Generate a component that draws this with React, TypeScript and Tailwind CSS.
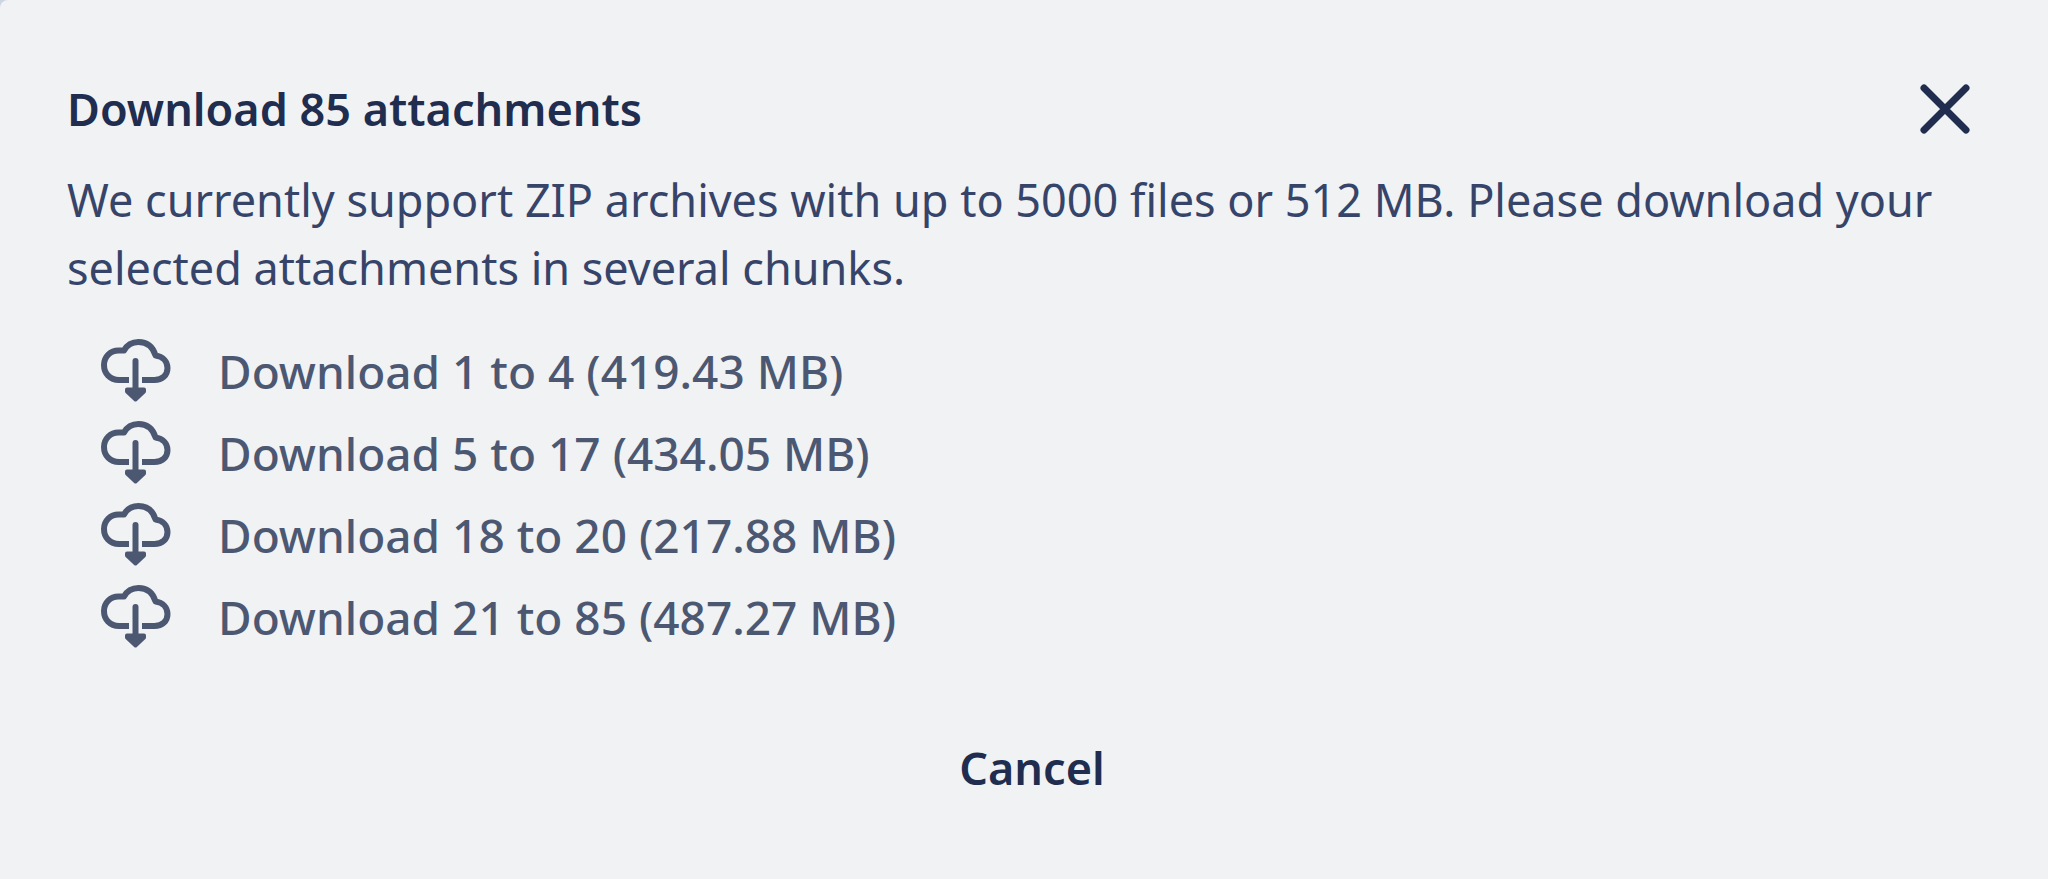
import React from 'react';

const CHUNKS = [
  { from: 1, to: 4, size: '419.43' },
  { from: 5, to: 17, size: '434.05' },
  { from: 18, to: 20, size: '217.88' },
  { from: 21, to: 85, size: '487.27' },
];

function CloudDownloadIcon() {
  return (
    <svg viewBox="0 0 72 66" className="w-[72px] h-[66px] shrink-0" fill="none" aria-hidden="true">
      <path
        d="M29 42H19C10 42 4 35.500 4 27C4 18.500 10.500 12.500 18.500 12.500H24C27 7 32 4 38.500 4C47 4 53 9 55.500 17.500C63 18.500 67.500 23.500 67.500 30C67.500 37.500 62 42 54.500 42H42"
        stroke="currentColor"
        strokeWidth="6"
        strokeLinejoin="round"
      />
      <path d="M35.500 23V54" stroke="currentColor" strokeWidth="6" strokeLinecap="round" />
      <path d="M27 51.500H44V53.500L35.500 61.500L27 53.500Z" fill="currentColor" stroke="currentColor" strokeWidth="4" strokeLinejoin="round" />
    </svg>
  );
}

export default function App() {
  return (
    <div className="min-h-screen bg-[#ccd3e2] flex flex-col font-['Noto_Sans',sans-serif]">
      <div role="dialog" aria-labelledby="dialog-title" className="flex-1 rounded-tl-lg bg-[#f0f2f4] text-[#202d4f] pl-[67px] pr-[51px] pt-[72px] pb-[64px]">
        {/* Header */}
        <div className="flex items-center justify-between h-[74px] mb-[20px]">
          <h1 id="dialog-title" className="text-[45px] leading-[68px] font-semibold">Download 85 attachments</h1>
          <button type="button" aria-label="Close" className="w-[104px] h-[72px] flex items-center justify-center">
            <svg viewBox="0 0 52 52" className="w-[52px] h-[52px]" fill="none" aria-hidden="true">
              <path d="M5 5L47 47M47 5L5 47" stroke="currentColor" strokeWidth="7" strokeLinecap="round" />
            </svg>
          </button>
        </div>

        <p className="text-[45px] leading-[68px] text-[#37446a]">
          We currently support ZIP archives with up to 5000 files or 512 MB. Please download your selected attachments in several chunks.
        </p>

        {/* Chunk list */}
        <ul className="mt-[28px] pl-[33px]">
          {CHUNKS.map((chunk) => (
            <li key={chunk.from}>
              <button type="button" className="flex items-center gap-[46px] h-[82px] text-[46px] leading-[68px] font-medium text-[#4c5872]">
                <CloudDownloadIcon />
                <span>{`Download ${chunk.from} to ${chunk.to} (${chunk.size} MB)`}</span>
              </button>
            </li>
          ))}
        </ul>

        <div className="flex justify-center mt-[76px]">
          <button type="button" className="text-[45px] leading-[68px] font-semibold">Cancel</button>
        </div>
      </div>
    </div>
  );
}
